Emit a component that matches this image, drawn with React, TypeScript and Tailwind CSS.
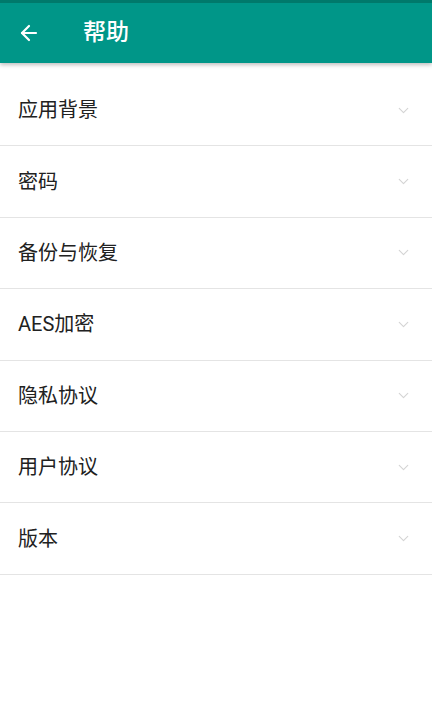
import { ArrowLeft, ChevronDown } from "lucide-react";

const items = ["应用背景", "密码", "备份与恢复", "AES加密", "隐私协议", "用户协议", "版本"];

const font = {
	fontFamily: '"Roboto", "Noto Sans CJK SC", sans-serif',
};

export default function App() {
	return (
		<div className="min-h-[720px] w-[432px] bg-white" style={font}>
			<header className="relative z-10 border-t-[3px] border-[#00796b] bg-[#009688] shadow-[0_2px_4px_rgba(0,0,0,0.25)]">
				<div className="flex h-[60px] items-center">
					<button className="ml-[17px] flex h-6 w-6 items-center justify-center text-white">
						<ArrowLeft size={24} strokeWidth={2.2} />
					</button>
					<h1 className="ml-[42px] text-[23px] font-medium text-white">帮助</h1>
				</div>
			</header>

			<ul className="pt-[12px]">
				{items.map((item) => (
					<li
						key={item}
						className="flex h-[71.4px] items-center justify-between border-b-[1.5px] border-[#e4e4e4] pl-[18px] pr-[20px]"
					>
						<span className="text-[20px] text-[#212121]">{item}</span>
						<ChevronDown size={17} strokeWidth={1.6} className="text-[#d4d4d4]" />
					</li>
				))}
			</ul>
		</div>
	);
}
